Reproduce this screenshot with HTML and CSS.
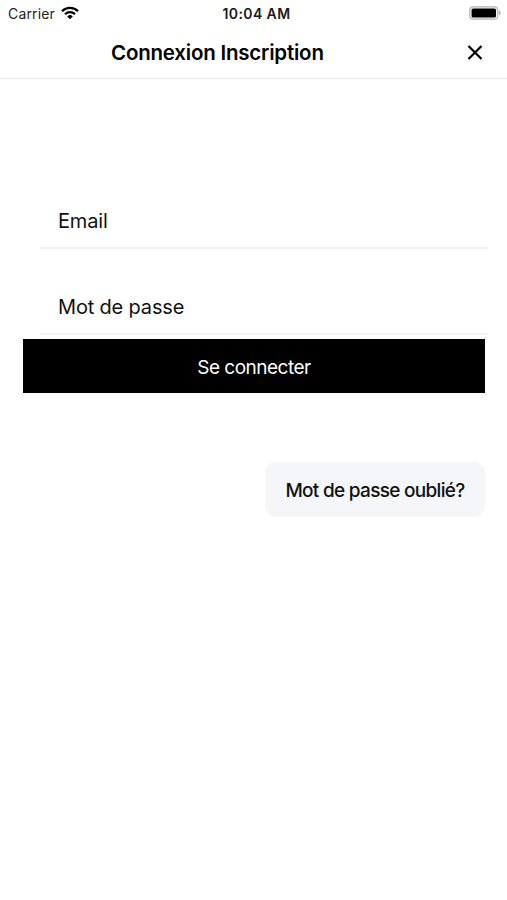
FILE: index.html
```html
<!DOCTYPE html>
<html lang="fr">
<head>
<meta charset="utf-8">
<title>Connexion Inscription</title>
<link rel="stylesheet" href="styles.css">
</head>
<body>
<div class="status">
  <div class="carrier"><span class="carrier-name">Carrier</span>
    <svg class="wifi" width="18" height="14" viewBox="0 0 18 14"><g fill="none" stroke="#000" stroke-width="2.3"><path d="M1 5.2a11.3 11.3 0 0 1 16 0"/><path d="M4 8.3a7 7 0 0 1 10 0"/></g><path d="M9 13.2 6.2 10.4a4 4 0 0 1 5.6 0Z"/></svg>
  </div>
  <span class="time">10:04 AM</span>
  <svg class="battery" width="32" height="14" viewBox="0 0 32 14"><rect x=".8" y=".8" width="28" height="12.4" rx="3.5" fill="#f4f4f4" stroke="#b4b4b4" stroke-width="1.2"/><rect x="2.6" y="2.4" width="24.4" height="9.2" rx="1.6"/><path d="M30.2 4.8c1.8.6 1.8 3.8 0 4.4Z" fill="#999"/></svg>
</div>
<header class="header">
  <h1 class="title">Connexion Inscription</h1>
  <svg class="close" width="16" height="16" viewBox="0 0 16 16"><path d="M1.5 2l13 13M14.5 2l-13 13" stroke="#000" stroke-width="2.2"/></svg>
</header>
<main class="form">
  <div class="field"><span class="label">Email</span></div>
  <div class="field"><span class="label">Mot de passe</span></div>
  <button class="submit">Se connecter</button>
  <button class="forgot">Mot de passe oublié?</button>
</main>
</body>
</html>
```
FILE: styles.css
```css
* { box-sizing: border-box; }
body { margin: 0; background: #fff; color: #000; font-family: Inter, sans-serif; min-height: 900px; }
.status { height: 27px; display: grid; grid-template-columns: 1fr auto 1fr; align-items: center; padding: 0 6px 0 8px; }
.carrier { display: flex; align-items: center; gap: 6px; }
.carrier-name { font-size: 14px; letter-spacing: .15px; color: #222; }
.wifi { margin-top: -2px; }
.time { font-size: 14px; font-weight: 600; letter-spacing: .4px; color: #1a1a1a; margin-left: 4px; }
.battery { justify-self: end; margin-top: -1px; }
.header { height: 52px; display: grid; grid-template-columns: 1fr 16px; align-items: center; padding: 0 24px 1px 111px; border-bottom: 1px solid #e8e8e8; }
.title { margin: 0; font-size: 20.5px; font-weight: 600; letter-spacing: -.21px; white-space: nowrap; }
.form { display: flex; flex-direction: column; padding: 115px 22px 0 23px; }
.field { height: 55px; margin: 0 -3px 31px 17px; padding: 0 18px; display: flex; align-items: center; border-bottom: 2px solid #f2f2f2; }
.field + .field { margin-bottom: 4px; }
.label { font-size: 20px; letter-spacing: -.17px; color: #111; }
button { border: 0; padding: 0; font: inherit; }
.submit { height: 54px; padding-top: 2px; background: #000; color: #fff; font-size: 19px; letter-spacing: -.5px; }
.forgot { align-self: flex-end; width: 220px; height: 55px; margin-top: 69px; padding-top: 1px; border-radius: 11px; background: #f4f6fa; color: #111; font-size: 19px; font-weight: 500; letter-spacing: -.7px; }
```
